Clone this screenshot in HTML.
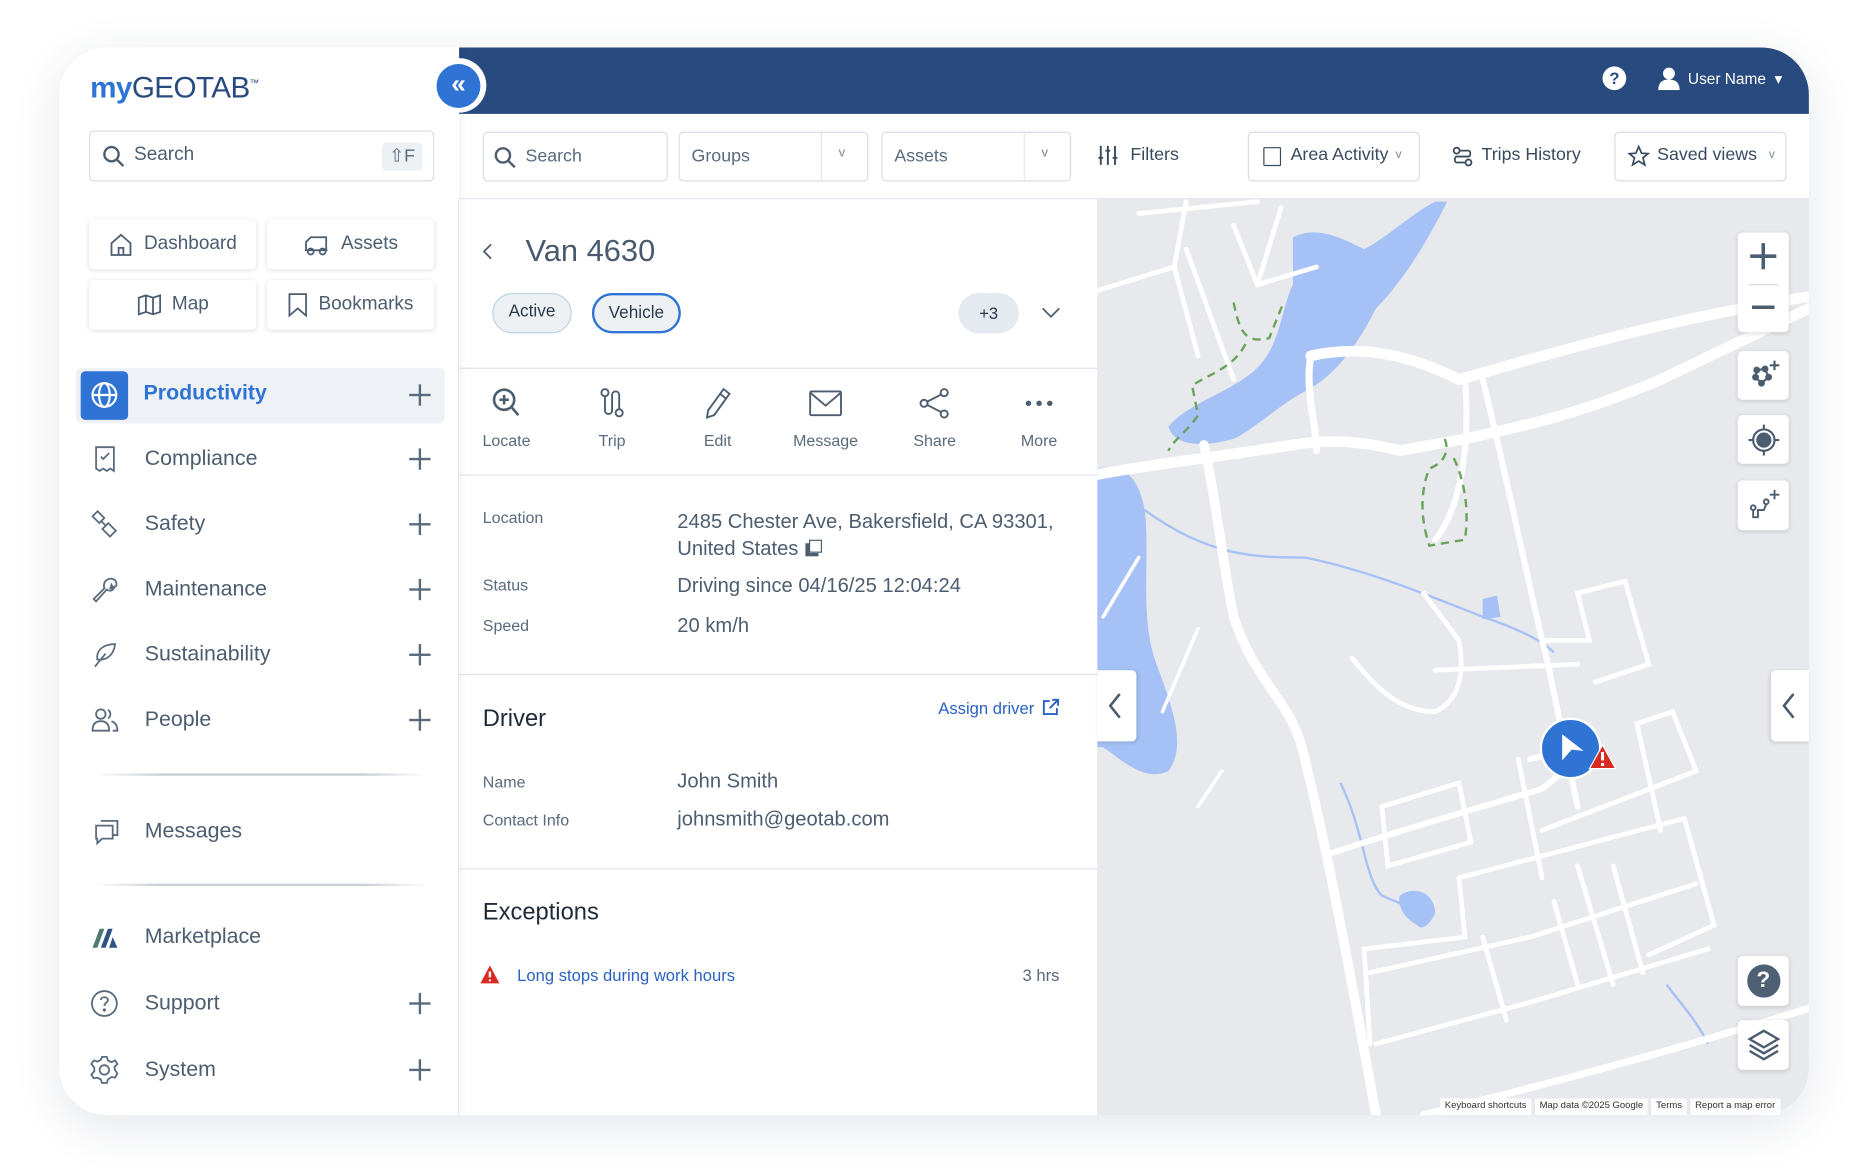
<!DOCTYPE html>
<html><head><meta charset="utf-8">
<style>
*{box-sizing:border-box;margin:0;padding:0}
html,body{width:1854px;height:1170px;overflow:hidden;background:#fff;font-family:"Liberation Sans",sans-serif}
#w{position:absolute;left:0;top:0;width:1563px;height:986px;transform:scale(1.18618);transform-origin:0 0}
.a{position:absolute}
.card{left:50px;top:40px;width:1475px;height:900px;border-radius:40px 40px 40px 40px;box-shadow:0 10px 40px rgba(40,60,90,.12);background:#fff;overflow:hidden}
.nav{color:#4d5d70;font-size:18px}
.box{border:1px solid #d8dde4;border-radius:4px;background:#fff}
.btn{background:#fff;border-radius:4px;box-shadow:0 1px 4px rgba(0,0,0,.12);display:flex;align-items:center;justify-content:center;gap:8px;font-size:16px;color:#4d5d70}
.plus{position:absolute;left:345px;width:18px;height:18px}
.plus:before,.plus:after{content:"";position:absolute;background:#5a6a7c}
.plus:before{left:8px;top:0;width:1.5px;height:18px}
.plus:after{left:0;top:8px;width:18px;height:1.5px}
.tb{font-size:15px;color:#3a4a5e;display:flex;align-items:center}
.lbl{font-size:13.5px;color:#5a6a7c}
.val{font-size:17px;color:#4d5d70}
.hr{height:1px;background:#dfe3e8}
.act{position:absolute;top:326px;width:70px;text-align:center;font-size:13.5px;color:#5a6a7c}
.act svg{display:block;margin:0 auto 10px}
.mc{position:absolute;left:1465px;width:43px;background:#fff;border-radius:4px;box-shadow:0 1px 4px rgba(0,0,0,.15);display:flex;align-items:center;justify-content:center}
</style></head><body><div id="w">
<div class="a card">
<div class="a" style="left:337px;top:0;width:1138px;height:56px;background:#284a7e"></div>
<div class="a" style="left:875px;top:128px;width:600px;height:772px;background:#e8e9ec;overflow:hidden">
<svg width="600" height="772" viewBox="925 168 600 772" style="position:absolute;left:0;top:0">
<g fill="#a5c1f5">
<path d="M1090 200 C1110 190 1130 200 1150 210 C1170 200 1190 180 1210 170 L1220 170 C1200 210 1180 240 1160 260 C1140 300 1120 320 1100 330 C1080 340 1060 360 1040 370 C1010 378 990 375 985 360 C1000 340 1040 330 1060 310 C1080 290 1080 260 1090 240 Z"/>
<path d="M925 395 C945 390 960 400 965 430 C970 470 960 520 975 560 C990 600 1000 630 985 650 C965 660 945 640 930 630 L925 630 Z"/>
<path d="M1180 755 C1195 745 1210 755 1210 770 C1205 780 1198 785 1195 780 C1185 775 1178 765 1180 755 Z"/>
<path d="M1250 505 L1262 502 L1265 520 L1250 522 Z"/>
</g>
<g fill="none" stroke="#a5c1f5" stroke-width="2">
<path d="M965 430 C1020 470 1060 470 1100 470 C1150 480 1200 500 1250 520 C1280 530 1300 540 1310 550"/>
<path d="M1130 660 C1150 700 1150 740 1165 755 C1175 760 1180 760 1185 765"/>
<path d="M1405 830 C1420 850 1430 860 1440 880"/>
</g>
<g fill="none" stroke="#fff" stroke-linecap="round">
<path stroke-width="9" d="M925 400 C980 390 1030 385 1090 375 C1120 370 1150 372 1180 380 L1235 370 C1280 360 1330 350 1400 320 L1525 260"/>
<path stroke-width="9" d="M1105 300 C1150 290 1190 300 1230 320 C1300 300 1400 270 1525 250"/>
<path stroke-width="8" d="M1015 375 C1025 420 1030 470 1040 520 C1060 580 1090 590 1100 640 C1120 720 1140 830 1160 940"/>
<path stroke-width="6" d="M1105 300 C1100 330 1110 360 1110 380"/>
<path stroke-width="5" d="M1235 320 C1240 380 1230 430 1210 455 M1250 320 C1270 400 1290 500 1305 560 L1330 680"/>
<path stroke-width="4" d="M925 245 L990 225 L1000 170 M990 225 L1010 300 M960 180 L1060 170 M1000 210 L1040 320 M1040 190 L1060 240 L1110 225 M1060 240 L1080 175"/>
<path stroke-width="4" d="M1140 555 C1160 580 1180 600 1210 600 C1230 590 1235 570 1230 540 L1200 500 M1210 565 L1330 560 M1300 540 L1340 540 L1330 500 L1370 490 L1390 560 L1345 575"/>
<path stroke-width="5" d="M1120 720 C1180 700 1250 680 1300 665 C1320 650 1330 640 1320 620 M1290 640 L1330 630"/>
<path stroke-width="4" d="M1280 640 L1300 740 M1300 700 L1430 650 L1410 600 L1380 610 L1400 700 M1230 740 L1420 690 L1445 780 L1390 805 M1230 740 L1235 790 L1150 800 L1155 880 M1155 820 L1290 790 M1290 790 L1430 745 M1160 880 L1290 845 L1440 800 M1330 730 L1360 830 M1360 730 L1385 820 M1250 790 L1270 860 M1310 760 L1330 830 M1165 680 L1230 660 L1240 710 L1170 730 Z"/>
<path stroke-width="6" d="M1200 940 C1280 920 1380 895 1525 850"/>
<path stroke-width="3" d="M1010 530 L980 600 M1030 650 L1010 680 M930 520 L960 470"/>
</g>
<g fill="none" stroke="#68a45a" stroke-width="2" stroke-dasharray="7 5">
<path d="M1040 255 C1045 280 1050 290 1070 285 L1082 255 M1050 290 C1040 310 1020 315 1005 325 L1010 350 C1000 365 990 370 985 380"/>
<path d="M1218 370 C1222 380 1218 390 1205 395 C1195 420 1200 445 1205 460 L1235 455 C1240 420 1230 395 1225 385"/>
</g>
</svg>
</div>
<div class="a" style="left:0;top:0;width:337px;height:900px;background:#fff;box-shadow:2px 0 6px rgba(0,0,0,.05)"></div>
</div>
<div class="a" style="left:364px;top:49px;width:46px;height:46px;border-radius:50%;background:#fff"></div>
<div class="a" style="left:368px;top:54px;width:37px;height:37px;border-radius:50%;background:#2f74d4;color:#fff;font-size:22px;line-height:34px;text-align:center;font-weight:bold">«</div>
<div class="a" style="left:76px;top:60px;font-size:25px;letter-spacing:-.5px"><span style="color:#2f74d4;font-weight:bold">my</span><span style="color:#284a7e">GEOTAB</span><sup style="font-size:8px;color:#284a7e">™</sup></div>
<div class="a box" style="left:75px;top:110px;width:291px;height:43px"></div>
<svg class="a" style="left:86px;top:122px" width="20" height="20"><circle cx="8" cy="8" r="6" fill="none" stroke="#4d5d70" stroke-width="2"/><path d="M12.5 12.5 L18 18" stroke="#4d5d70" stroke-width="2"/></svg>
<div class="a" style="left:113px;top:122px;font-size:16px;color:#4d5d70">Search</div>
<div class="a" style="left:322px;top:120px;width:34px;height:24px;background:#eef1f4;border-radius:4px;font-size:15px;color:#5a6a7c;text-align:center;line-height:24px">⇧F</div>
<div class="a btn" style="left:75px;top:185px;width:141px;height:42px"><svg width="22" height="22" viewBox="0 0 22 22" fill="none" stroke="#4d5d70" stroke-width="1.5"><path d="M3 10 L11 3 L19 10 V20 H3 Z M9 20 V14 H13 V20"/></svg>Dashboard</div>
<div class="a btn" style="left:225px;top:185px;width:141px;height:42px"><svg width="24" height="20" viewBox="0 0 24 20" fill="none" stroke="#4d5d70" stroke-width="1.5"><path d="M3 15 V8 L7 4 H20 V15 M2 15 H21"/><circle cx="7" cy="16" r="2.5"/><circle cx="17" cy="16" r="2.5"/></svg>Assets</div>
<div class="a btn" style="left:75px;top:236px;width:141px;height:42px"><svg width="22" height="20" viewBox="0 0 22 20" fill="none" stroke="#4d5d70" stroke-width="1.5"><path d="M2 4 L8 2 L14 4 L20 2 V16 L14 18 L8 16 L2 18 Z M8 2 V16 M14 4 V18"/></svg>Map</div>
<div class="a btn" style="left:225px;top:236px;width:141px;height:42px"><svg width="18" height="22" viewBox="0 0 18 22" fill="none" stroke="#4d5d70" stroke-width="1.5"><path d="M2 2 H16 V20 L9 14 L2 20 Z"/></svg>Bookmarks</div>
<div class="a" style="left:64px;top:310px;width:311px;height:47px;background:#eef1f5;border-radius:5px"></div>
<div class="a" style="left:68px;top:313px;width:40px;height:41px;background:#2f74d4;border-radius:4px"></div>
<svg class="a" style="left:76px;top:321px" width="24" height="24" viewBox="0 0 24 24" fill="none" stroke="#fff" stroke-width="1.8"><circle cx="12" cy="12" r="10"/><ellipse cx="12" cy="12" rx="4.5" ry="10"/><path d="M2 12 H22"/></svg>
<div class="a" style="left:121px;top:321px;font-size:18px;color:#2f74d4;font-weight:bold">Productivity</div>
<div class="plus" style="top:324px"></div>
<svg class="a" style="left:78px;top:375px" width="22" height="24" viewBox="0 0 22 24" fill="none" stroke="#5a6a7c" stroke-width="1.5"><path d="M3 2 H18 V22 L15 20 L12 22 L9 20 L6 22 L3 20 Z M7 10 L9 12 L14 7"/></svg>
<div class="a nav" style="left:122px;top:376px">Compliance</div><div class="plus" style="top:378px"></div>
<svg class="a" style="left:76px;top:430px" width="26" height="26" viewBox="0 0 26 26" fill="none" stroke="#5a6a7c" stroke-width="1.5"><rect x="3" y="3" width="8" height="6" transform="rotate(45 7 6)"/><rect x="12" y="13" width="9" height="7" transform="rotate(45 16 16)"/><path d="M9 9 L13 13"/></svg>
<div class="a nav" style="left:122px;top:431px">Safety</div><div class="plus" style="top:433px"></div>
<svg class="a" style="left:76px;top:485px" width="26" height="26" viewBox="0 0 26 26" fill="none" stroke="#5a6a7c" stroke-width="1.5"><path d="M16 3 C20 2 23 5 22 9 L19 10 L18 8 L17 11 L20 11 C18 14 15 13 14 12 L5 22 L3 20 L12 11 C11 8 12 4 16 3 Z"/></svg>
<div class="a nav" style="left:122px;top:486px">Maintenance</div><div class="plus" style="top:488px"></div>
<svg class="a" style="left:77px;top:540px" width="24" height="24" viewBox="0 0 24 24" fill="none" stroke="#5a6a7c" stroke-width="1.5"><path d="M20 3 C10 3 4 8 5 16 C12 17 19 13 20 3 Z M3 22 L12 11"/></svg>
<div class="a nav" style="left:122px;top:541px">Sustainability</div><div class="plus" style="top:543px"></div>
<svg class="a" style="left:76px;top:595px" width="26" height="24" viewBox="0 0 26 24" fill="none" stroke="#5a6a7c" stroke-width="1.5"><circle cx="9" cy="7" r="4"/><path d="M2 21 C2 15 5 13 9 13 C13 13 16 15 16 21 Z"/><path d="M15 3.5 A4 4 0 0 1 15 10.5 M18 13 C21 14 23 16 23 21 H19"/></svg>
<div class="a nav" style="left:122px;top:596px">People</div><div class="plus" style="top:598px"></div>
<div class="a" style="left:80px;top:652px;width:280px;height:2px;background:linear-gradient(90deg,rgba(200,205,212,0),#c8cdd4 20%,#c8cdd4 80%,rgba(200,205,212,0))"></div>
<svg class="a" style="left:78px;top:689px" width="24" height="24" viewBox="0 0 24 24" fill="none" stroke="#5a6a7c" stroke-width="1.5"><path d="M7 3 H21 V15 H17 M3 7 H17 V18 H8 L4 22 V18 H3 Z"/></svg>
<div class="a nav" style="left:122px;top:690px">Messages</div>
<div class="a" style="left:80px;top:745px;width:280px;height:2px;background:linear-gradient(90deg,rgba(200,205,212,0),#c8cdd4 20%,#c8cdd4 80%,rgba(200,205,212,0))"></div>
<svg class="a" style="left:77px;top:781px" width="24" height="20" viewBox="0 0 24 20"><path d="M1 18 L7 2 L11 2 L5 18 Z" fill="#4e7b6e"/><path d="M8 18 L14 2 L18 2 L12 18 Z" fill="#2d5288"/><path d="M15 18 L18 9 L22 18 Z" fill="#2d5288"/></svg>
<div class="a nav" style="left:122px;top:779px">Marketplace</div>
<svg class="a" style="left:76px;top:834px" width="24" height="24" viewBox="0 0 24 24" fill="none" stroke="#5a6a7c" stroke-width="1.5"><circle cx="12" cy="12" r="10.5"/><path d="M9 9 C9 6 15 6 15 9 C15 11 12 11.5 12 14"/><circle cx="12" cy="17.5" r=".6" fill="#5a6a7c"/></svg>
<div class="a nav" style="left:122px;top:835px">Support</div><div class="plus" style="top:837px"></div>
<svg class="a" style="left:75px;top:889px" width="26" height="26" viewBox="0 0 26 26" fill="none" stroke="#5a6a7c" stroke-width="1.5"><circle cx="13" cy="13" r="4"/><path d="M11 2 H15 L16 5 L19 6.5 L22 5 L24 8 L21.5 10.5 L22 13 L24 16 L22 19.5 L19 19 L16 21 L15 24 H11 L10 21 L7 19.5 L4 20 L2 17 L4.5 14 L4.5 11 L2 8 L4 5 L7 6 L10 4.5 Z"/></svg>
<div class="a nav" style="left:122px;top:891px">System</div><div class="plus" style="top:893px"></div>
<div class="a" style="left:1351px;top:56px;width:20px;height:20px;border-radius:50%;background:#fff;color:#284a7e;font-weight:bold;font-size:14px;text-align:center;line-height:20px">?</div>
<svg class="a" style="left:1397px;top:56px" width="20" height="20" viewBox="0 0 20 20" fill="#fff"><circle cx="10" cy="6" r="5"/><path d="M1 20 C1 13 5 11 10 11 C15 11 19 13 19 20 Z"/></svg>
<div class="a" style="left:1423px;top:59px;font-size:13px;color:#fff">User Name &nbsp;▾</div>
<div class="a" style="left:387px;top:167px;width:1138px;height:1px;background:#e2e5ea"></div>
<div class="a box" style="left:407px;top:111px;width:156px;height:42px"></div>
<svg class="a" style="left:416px;top:123px" width="20" height="20"><circle cx="8" cy="8" r="6" fill="none" stroke="#4d5d70" stroke-width="2"/><path d="M12.5 12.5 L18 18" stroke="#4d5d70" stroke-width="2"/></svg>
<div class="a" style="left:443px;top:123px;font-size:15px;color:#5a6a7c">Search</div>
<div class="a box" style="left:572px;top:111px;width:160px;height:42px"></div>
<div class="a" style="left:692px;top:112px;width:1px;height:40px;background:#e2e5ea"></div>
<div class="a" style="left:583px;top:123px;font-size:15px;color:#5a6a7c">Groups</div>
<div class="a" style="left:707px;top:123px;font-size:11px;color:#7a8896">v</div>
<div class="a box" style="left:743px;top:111px;width:160px;height:42px"></div>
<div class="a" style="left:863px;top:112px;width:1px;height:40px;background:#e2e5ea"></div>
<div class="a" style="left:754px;top:123px;font-size:15px;color:#5a6a7c">Assets</div>
<div class="a" style="left:878px;top:123px;font-size:11px;color:#7a8896">v</div>
<svg class="a" style="left:925px;top:122px" width="18" height="18" viewBox="0 0 18 18" stroke="#3a4a5e" stroke-width="1.6"><path d="M3 1 V17 M9 1 V17 M15 1 V17 M1 11 H5 M7 5 H11 M13 11 H17"/></svg>
<div class="a tb" style="left:953px;top:122px">Filters</div>
<div class="a box" style="left:1052px;top:111px;width:145px;height:42px"></div>
<div class="a" style="left:1065px;top:124px;width:15px;height:16px;border:1.5px solid #3a4a5e;border-radius:1px"></div>
<div class="a tb" style="left:1088px;top:122px">Area Activity <span style="font-size:10px;margin-left:6px;color:#7a8896">v</span></div>
<svg class="a" style="left:1224px;top:123px" width="18" height="18" viewBox="0 0 18 18" fill="none" stroke="#3a4a5e" stroke-width="1.5"><circle cx="4" cy="4" r="2.5"/><circle cx="14" cy="14" r="2.5"/><path d="M7 4 H14 C16 4 16 9 14 9 H4 C2 9 2 14 4 14 H11"/></svg>
<div class="a tb" style="left:1249px;top:122px">Trips History</div>
<div class="a box" style="left:1361px;top:111px;width:145px;height:42px"></div>
<svg class="a" style="left:1372px;top:122px" width="19" height="19" viewBox="0 0 24 24" fill="none" stroke="#3a4a5e" stroke-width="1.8"><path d="M12 2 L15 9 L22 9.5 L16.5 14 L18.5 21.5 L12 17.5 L5.5 21.5 L7.5 14 L2 9.5 L9 9 Z"/></svg>
<div class="a tb" style="left:1397px;top:122px">Saved views <span style="font-size:10px;margin-left:10px;color:#7a8896">v</span></div>
<div class="a" style="left:386px;top:168px;width:1px;height:772px;background:#e2e5ea"></div>
<svg class="a" style="left:405px;top:204px" width="12" height="16"><path d="M9 2 L3 8 L9 14" fill="none" stroke="#4d5d70" stroke-width="1.5"/></svg>
<div class="a" style="left:443px;top:196px;font-size:26px;color:#4a5a6e">Van 4630</div>
<div class="a" style="left:415px;top:247px;width:67px;height:34px;border-radius:17px;background:#eef1f4;border:1.5px solid #b8d3e6;font-size:14.5px;color:#2c3a4c;text-align:center;line-height:31px">Active</div>
<div class="a" style="left:499px;top:247px;width:75px;height:34px;border-radius:17px;background:#eef1f4;border:2px solid #2f74d4;font-size:14.5px;color:#2c3a4c;text-align:center;line-height:30px">Vehicle</div>
<div class="a" style="left:808px;top:247px;width:51px;height:34px;border-radius:17px;background:#e5eaf0;font-size:14px;color:#2c3a4c;text-align:center;line-height:34px">+3</div>
<svg class="a" style="left:878px;top:258px" width="16" height="12"><path d="M1 2 L8 9 L15 2" fill="none" stroke="#4d5d70" stroke-width="1.5"/></svg>
<div class="a hr" style="left:387px;top:310px;width:538px"></div>
<div class="act" style="left:392px"><svg width="26" height="28" viewBox="0 0 26 28" fill="none" stroke="#4d5d70" stroke-width="2.2"><circle cx="11" cy="11" r="8.5"/><path d="M11 7 V15 M7 11 H15 M17 17 L23 24"/></svg>Locate</div>
<div class="act" style="left:481px"><svg width="26" height="28" viewBox="0 0 26 28" fill="none" stroke="#4d5d70" stroke-width="1.6"><circle cx="7" cy="5" r="3"/><circle cx="19" cy="22" r="3"/><path d="M7 8 V20 C7 24 13 24 13 20 V7 C13 3 19 3 19 7 V19"/></svg>Trip</div>
<div class="act" style="left:570px"><svg width="26" height="28" viewBox="0 0 26 28" fill="none" stroke="#4d5d70" stroke-width="1.6"><path d="M18 2 L23 6 L10 24 L4 26 L5 20 Z M15 6 L20 10"/></svg>Edit</div>
<div class="act" style="left:661px"><svg width="30" height="28" viewBox="0 0 30 28" fill="none" stroke="#4d5d70" stroke-width="1.6"><rect x="2" y="4" width="26" height="20" rx="1"/><path d="M2 5 L15 16 L28 5"/></svg>Message</div>
<div class="act" style="left:753px"><svg width="28" height="28" viewBox="0 0 28 28" fill="none" stroke="#4d5d70" stroke-width="1.6"><circle cx="22" cy="5" r="3"/><circle cx="5" cy="14" r="3"/><circle cx="22" cy="23" r="3"/><path d="M8 12.5 L19.5 6.5 M8 15.5 L19.5 21.5"/></svg>Share</div>
<div class="act" style="left:841px"><svg width="28" height="28" viewBox="0 0 28 28" fill="#4d5d70"><circle cx="5" cy="14" r="2.3"/><circle cx="14" cy="14" r="2.3"/><circle cx="23" cy="14" r="2.3"/></svg>More</div>
<div class="a hr" style="left:387px;top:400px;width:538px"></div>
<div class="a lbl" style="left:407px;top:429px">Location</div>
<div class="a val" style="left:571px;top:428px;line-height:23px">2485 Chester Ave, Bakersfield, CA 93301,<br>United States <span style="display:inline-block;width:11px;height:11px;border:1.5px solid #4d5d70;box-shadow:-3px 3px 0 #4d5d70;margin-left:4px;vertical-align:2px"></span></div>
<div class="a lbl" style="left:407px;top:486px">Status</div>
<div class="a val" style="left:571px;top:484px">Driving since 04/16/25 12:04:24</div>
<div class="a lbl" style="left:407px;top:520px">Speed</div>
<div class="a val" style="left:571px;top:518px">20 km/h</div>
<div class="a hr" style="left:387px;top:568px;width:538px"></div>
<div class="a" style="left:407px;top:595px;font-size:20px;color:#1f2a38">Driver</div>
<div class="a" style="left:791px;top:589px;font-size:14px;color:#2a62c4">Assign driver</div>
<svg class="a" style="left:878px;top:588px" width="16" height="16" viewBox="0 0 16 16" fill="none" stroke="#2a62c4" stroke-width="1.6"><path d="M7 3 H2 V14 H13 V9 M9 2 H14 V7 M14 2 L7 9"/></svg>
<div class="a lbl" style="left:407px;top:652px">Name</div>
<div class="a val" style="left:571px;top:649px">John Smith</div>
<div class="a lbl" style="left:407px;top:684px">Contact Info</div>
<div class="a val" style="left:571px;top:681px">johnsmith@geotab.com</div>
<div class="a hr" style="left:387px;top:732px;width:538px"></div>
<div class="a" style="left:407px;top:758px;font-size:20px;color:#1f2a38">Exceptions</div>
<svg class="a" style="left:404px;top:813px" width="18" height="17" viewBox="0 0 18 17"><path d="M9 1 L17 16 H1 Z" fill="#d82a20"/><path d="M9 6 V11" stroke="#fff" stroke-width="2"/><circle cx="9" cy="13.5" r="1" fill="#fff"/></svg>
<div class="a" style="left:436px;top:814px;font-size:14px;color:#2a62c4">Long stops during work hours</div>
<div class="a" style="left:862px;top:814px;font-size:14px;color:#5a6a7c">3 hrs</div>
<div class="a" style="left:925px;top:565px;width:33px;height:60px;background:#fff;border-radius:0 4px 4px 0;box-shadow:1px 1px 3px rgba(0,0,0,.12)"></div>
<svg class="a" style="left:933px;top:583px" width="14" height="24"><path d="M11 2 L3 12 L11 22" fill="none" stroke="#4d5d70" stroke-width="2.2"/></svg>
<div class="a" style="left:1493px;top:565px;width:32px;height:60px;background:#fff;border-radius:4px 0 0 4px;box-shadow:-1px 1px 3px rgba(0,0,0,.12)"></div>
<svg class="a" style="left:1501px;top:583px" width="14" height="24"><path d="M11 2 L3 12 L11 22" fill="none" stroke="#4d5d70" stroke-width="2.2"/></svg>
<div class="mc" style="top:196px;height:84px;display:block">
<svg width="43" height="84"><path d="M21.5 9 V31 M10.5 20 H32.5" stroke="#4d5d70" stroke-width="3"/><path d="M9 44 H34" stroke="#d5dae0" stroke-width="1"/><path d="M12 63 H31" stroke="#4d5d70" stroke-width="3"/></svg></div>
<div class="mc" style="top:296px;height:41px"><svg width="30" height="30" viewBox="0 0 30 30" fill="none" stroke="#4d5d70" stroke-width="1.8"><path d="M9 10 L16 9 L19 16 L13 21 L8 16 Z"/><circle cx="9" cy="10" r="2" fill="#4d5d70"/><circle cx="16" cy="9" r="2" fill="#4d5d70"/><circle cx="19" cy="16" r="2" fill="#4d5d70"/><circle cx="13" cy="21" r="2" fill="#4d5d70"/><circle cx="8" cy="16" r="2" fill="#4d5d70"/><path d="M24 2 V10 M20 6 H28"/></svg></div>
<div class="mc" style="top:350px;height:41px"><svg width="30" height="30" viewBox="0 0 30 30" fill="none" stroke="#4d5d70" stroke-width="1.8"><circle cx="15" cy="15" r="9"/><circle cx="15" cy="15" r="5.5" fill="#4d5d70"/><path d="M15 2 V6 M15 24 V28 M2 15 H6 M24 15 H28"/></svg></div>
<div class="mc" style="top:405px;height:42px"><svg width="30" height="30" viewBox="0 0 30 30" fill="none" stroke="#4d5d70" stroke-width="1.6"><circle cx="6" cy="17" r="2"/><circle cx="17" cy="12" r="2"/><path d="M6 19 V25 H10 V19 H15 L17 14 M24 2 V10 M20 6 H28"/></svg></div>
<div class="mc" style="top:806px;height:42px"><div style="width:28px;height:28px;border-radius:50%;background:#4f6075;color:#fff;font-weight:bold;font-size:19px;text-align:center;line-height:28px">?</div></div>
<div class="mc" style="top:860px;height:42px"><svg width="30" height="30" viewBox="0 0 30 30" fill="none" stroke="#4d5d70" stroke-width="2"><path d="M15 3 L27 10 L15 17 L3 10 Z M3 15 L15 22 L27 15 M3 20 L15 27 L27 20"/></svg></div>
<div class="a" style="left:1298px;top:605px;width:52px;height:52px;border-radius:50%;background:#2f74d4;border:2px solid #fff"></div>
<svg class="a" style="left:1313px;top:617px" width="24" height="26"><path d="M4 2 L22 16 L12 15 L4 24 Z" fill="#fff"/></svg>
<svg class="a" style="left:1339px;top:627px" width="24" height="22"><path d="M12 1 L23 21 H1 Z" fill="#d82a20" stroke="#fff" stroke-width="1"/><path d="M12 7 V14" stroke="#fff" stroke-width="2.5"/><circle cx="12" cy="17.5" r="1.4" fill="#fff"/></svg>
<div class="a" style="left:1214px;top:926px;width:300px;height:14px;font-size:8px;color:#333;display:flex;gap:3px;white-space:nowrap">
<span style="background:rgba(255,255,255,.85);padding:1px 4px">Keyboard shortcuts</span><span style="background:rgba(255,255,255,.85);padding:1px 4px">Map data ©2025 Google</span><span style="background:rgba(255,255,255,.85);padding:1px 4px">Terms</span><span style="background:rgba(255,255,255,.85);padding:1px 4px">Report a map error</span></div>
</div></body></html>
